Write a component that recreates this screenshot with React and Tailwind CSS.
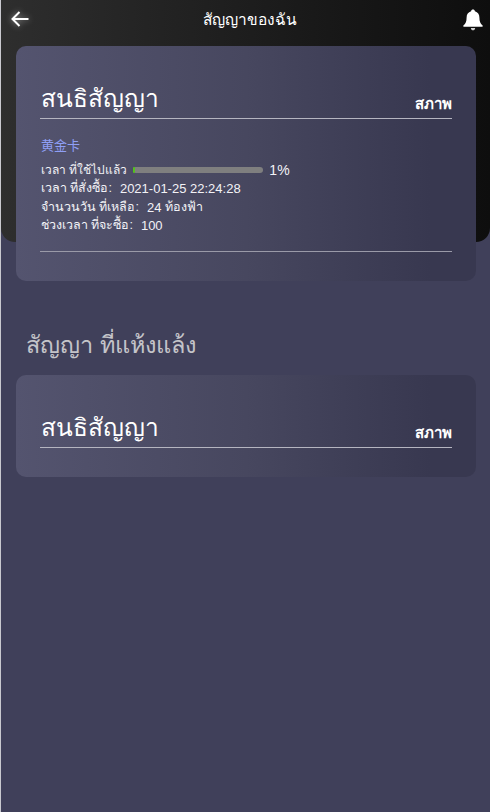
import React from "react";

function ArrowLeft() {
  return (
    <svg width="20" height="18" viewBox="0 0 20 18" fill="none" stroke="white" strokeWidth="2" className="drop-shadow-[0_0_3px_rgba(255,255,255,0.5)]">
      <path d="M18.5 9H2.5" />
      <path d="M9.5 2L2.5 9L9.5 16" />
    </svg>
  );
}

function Bell() {
  return (
    <svg width="20" height="22" viewBox="0 0 20 22" fill="white">
      <path d="M10 0.5C8.9 0.5 8.2 1.2 8.1 2.2C5.2 3 3.6 5.4 3.6 8.4C3.6 12.4 2.6 14.4 0.6 16.2C0 16.8 0.2 17.8 1.2 17.8H18.8C19.8 17.8 20 16.8 19.4 16.2C17.4 14.4 16.4 12.4 16.4 8.4C16.4 5.4 14.8 3 11.9 2.2C11.8 1.2 11.1 0.5 10 0.5Z" />
      <path d="M7.8 19C8 20.4 8.9 21.3 10 21.3C11.1 21.3 12 20.4 12.2 19H7.8Z" fill="#cfcfcf" />
    </svg>
  );
}

function CardHeader() {
  return (
    <div className="flex h-[43px] items-end justify-between border-b border-[#b5b5c0]">
      <span className="pl-px text-[24.5px] leading-[38px] text-white">สนธิสัญญา</span>
      <span className="mb-[4px] text-[15px] leading-[20px] font-semibold text-white">สภาพ</span>
    </div>
  );
}

function InfoRow({ children }) {
  return <div className="flex h-[18.5px] items-center pl-px text-[12.5px] font-medium text-[#f2f2f6] whitespace-pre">{children}</div>;
}

function Num({ children }) {
  return <span className="ml-px font-['Liberation_Sans',sans-serif] text-[13px] font-normal">{children}</span>;
}

export default function App() {
  return (
    <div className="relative min-h-[812px] w-[490px] overflow-hidden border-l border-[#c9c9cf] bg-[#40405a] font-['Tahoma','Liberation_Sans',sans-serif]">
      {/* dark hero behind the first card */}
      <div className="absolute inset-x-0 top-0 h-[242px] rounded-b-[14px] bg-gradient-to-r from-[#2e2e2e] to-[#0e0e0e]" />

      <div className="relative">
        <header className="flex h-[46px] items-start justify-between pl-[9px] pr-[7px]">
          <div className="mt-[10px]"><ArrowLeft /></div>
          <h1 className="mt-[8px] ml-[6px] text-[15.5px] leading-[24px] font-medium text-white">สัญญาของฉัน</h1>
          <div className="mt-[9px]"><Bell /></div>
        </header>

        <section className="ml-[15px] mr-[14px] h-[235px] rounded-[10px] bg-gradient-to-r from-[#54546f] via-[#47475f] to-[#383850] to-90% px-[24px] pt-[30px]">
          <CardHeader />
          <div className="mt-[16px] mb-[6px] h-[20px] pl-px font-['Noto_Sans_CJK_SC',sans-serif] text-[13px] leading-[20px] text-[#8f9ff5]">黄金卡</div>
          <InfoRow>
            <span className="text-[12px]">เวลา ที่ใช้ไปแล้ว</span>
            <div className="ml-[6px] h-[6px] w-[130px] rounded-full bg-[#7f7f7f]">
              <div className="h-full w-[1%] rounded-full bg-[#52c41a]" />
            </div>
            <span className="ml-[6px] font-['Liberation_Sans',sans-serif] text-[14px] font-normal">1%</span>
          </InfoRow>
          <InfoRow>เวลา ที่สั่งซื้อ:  <Num>2021-01-25 22:24:28</Num></InfoRow>
          <InfoRow>จำนวนวัน ที่เหลือ:  <Num>24</Num> ท้องฟ้า</InfoRow>
          <InfoRow>ช่วงเวลา ที่จะซื้อ:  <Num>100</Num></InfoRow>
          <div className="mt-[16px] border-b border-[#9a9aa8]" />
        </section>

        <h2 className="mt-[46px] ml-[25px] h-[48px] text-[23.5px] leading-[36px] text-[#c4c4c9]">สัญญา ที่แห้งแล้ง</h2>

        <section className="ml-[15px] mr-[14px] h-[102px] rounded-[10px] bg-gradient-to-r from-[#54546f] via-[#47475f] to-[#383850] to-90% px-[24px] pt-[30px]">
          <CardHeader />
        </section>
      </div>
    </div>
  );
}
